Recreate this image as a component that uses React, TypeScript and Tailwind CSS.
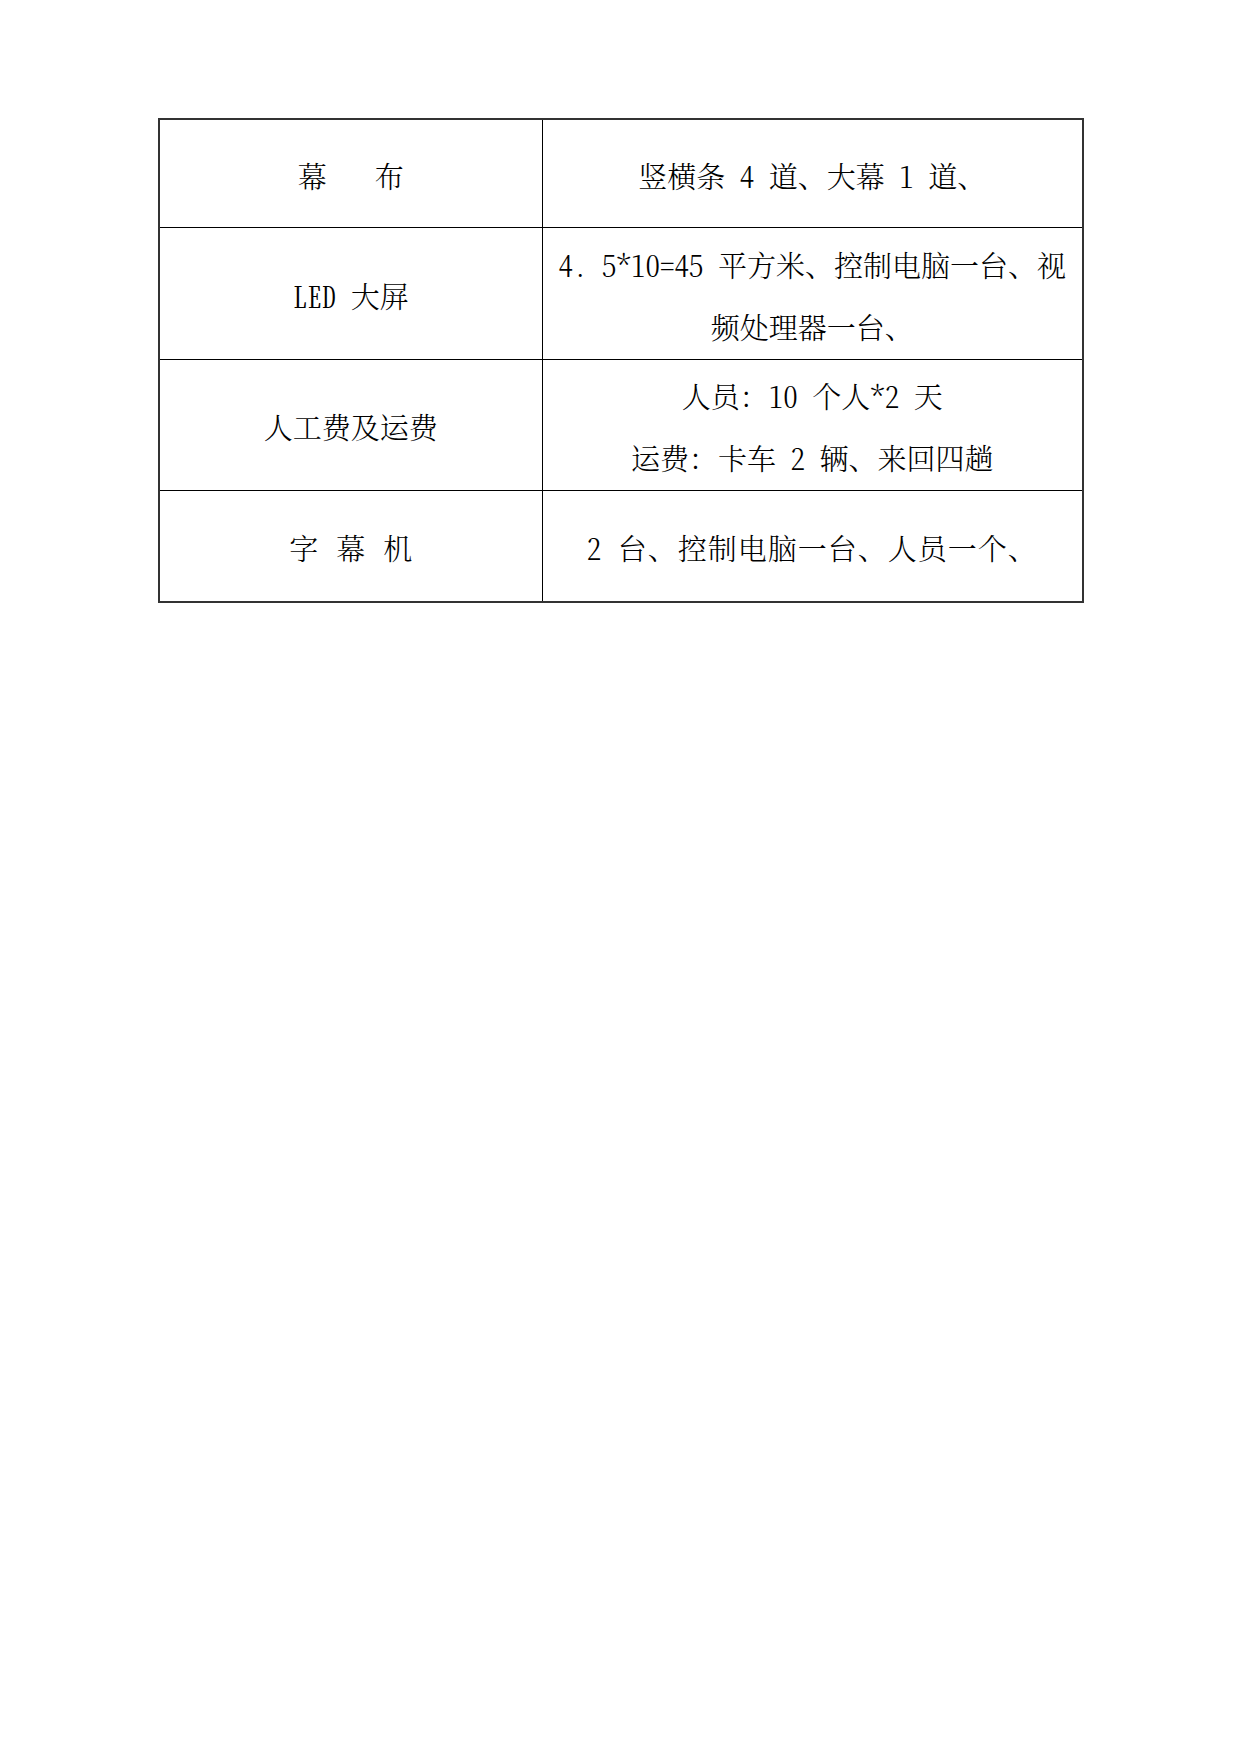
const FONT = "font-['Noto_Serif_CJK_SC','Liberation_Serif','Noto_Sans_CJK_SC',serif] [font-feature-settings:'hwid']";

type Row = {
  height: string;
  label: React.ReactNode;
  lines: string[];
  tracking?: string;
};

const rows: Row[] = [
  {
    height: 'h-[108px]',
    label: (
      <span className="inline-flex gap-[48px]">
        <span>幕</span>
        <span>布</span>
      </span>
    ),
    lines: ['竖横条 4 道、大幕 1 道、'],
  },
  {
    height: 'h-[132px]',
    label: 'LED 大屏',
    lines: ['4. 5*10=45 平方米、控制电脑一台、视', '频处理器一台、'],
  },
  {
    height: 'h-[131px]',
    label: '人工费及运费',
    lines: ['人员：10 个人*2 天', '运费：卡车 2 辆、来回四趟'],
  },
  {
    height: 'h-[112px]',
    label: (
      <span className="inline-flex gap-[18px]">
        <span>字</span>
        <span>幕</span>
        <span>机</span>
      </span>
    ),
    lines: ['2 台、控制电脑一台、人员一个、'],
    tracking: 'tracking-[1px]',
  },
];

export default function App() {
  return (
    <div className={`w-[1240px] h-[1754px] bg-white text-black pt-[118px] pl-[158px] ${FONT}`}>
      <table className="w-[924px] table-fixed border-collapse border-2 border-[#333]">
        <colgroup>
          <col className="w-[383px]" />
          <col className="w-[541px]" />
        </colgroup>
        <tbody>
          {rows.map((row, i) => (
            <tr key={i} className={row.height}>
              <td className="border border-black p-0 pt-[5px] text-center align-middle text-[29px] leading-[62px] font-light">
                {row.label}
              </td>
              <td className={`border border-black p-0 pt-[5px] text-center align-middle text-[29px] leading-[62px] font-light ${row.tracking ?? ''}`}>
                {row.lines.map((line, j) => (
                  <div key={j} className="whitespace-nowrap">
                    {line}
                  </div>
                ))}
              </td>
            </tr>
          ))}
        </tbody>
      </table>
    </div>
  );
}
